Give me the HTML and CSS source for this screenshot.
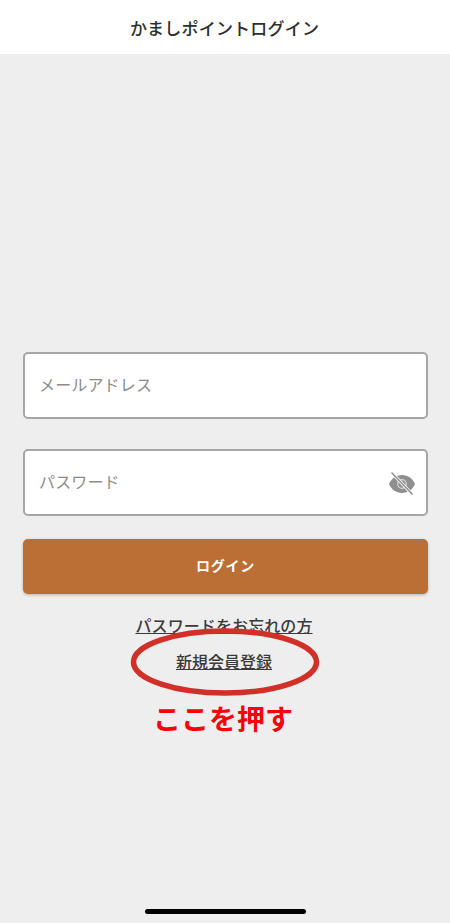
FILE: index.html
```html
<!DOCTYPE html>
<html lang="ja">
<head>
<meta charset="utf-8">
<title>かましポイントログイン</title>
<link rel="stylesheet" href="styles.css">
</head>
<body>
<div class="app">
  <header class="topbar"><h1 class="title">かましポイントログイン</h1></header>
  <main class="content">
    <form class="form">
      <div class="field"><span class="placeholder">メールアドレス</span></div>
      <div class="field field-password">
        <span class="placeholder">パスワード</span>
        <svg class="eye" viewBox="0 0 28 24" width="28" height="24" aria-hidden="true">
          <path fill="#8f8f8f" d="M14 4C8 4 3.200 7.800 1 13c2.200 5.200 7 9 13 9s10.800-3.800 13-9C24.800 7.800 20 4 14 4z"/>
          <circle cx="14" cy="13" r="4.300" fill="none" stroke="#d9d9d9" stroke-width="1.200"/>
          <path stroke="#fff" stroke-width="3.200" d="M4 2l20 21"/>
          <path stroke="#8f8f8f" stroke-width="1.500" d="M3.500 1.500l21 22"/>
        </svg>
      </div>
      <button class="login" type="button"><span class="login-label">ログイン</span></button>
    </form>
    <div class="links">
      <a class="link">パスワードをお忘れの方</a>
      <a class="link link-small">新規会員登録</a>
      <p class="note">ここを押す</p>
      <svg class="ring" viewBox="0 0 190 68" width="190" height="68" aria-hidden="true">
        <ellipse cx="95" cy="34" rx="91.500" ry="31" fill="none" stroke="#d13029" stroke-width="5.500"/>
      </svg>
    </div>
  </main>
  <div class="homebar"></div>
</div>
</body>
</html>
```
FILE: styles.css
```css
* { box-sizing: border-box; }
html, body { margin: 0; height: 100%; }
body {
  background: #eeeeee;
  font-family: "Noto Sans CJK JP", "Noto Sans", sans-serif;
  color: #333;
}
.app {
  position: relative;
  width: 450px;
  height: 923px;
  display: flex;
  flex-direction: column;
  overflow: hidden;
}
.topbar {
  height: 54px;
  background: #fff;
  display: flex;
  align-items: center;
  justify-content: center;
  flex: none;
  padding-right: 1px;
}
.title {
  margin: 0;
  font-size: 17px;
  font-weight: 500;
  line-height: 1;
  color: #2e2e2e;
  letter-spacing: 0.2px;
}
.content {
  flex: 1;
  padding: 298px 22px 0 23px;
  display: flex;
  flex-direction: column;
}
.form {
  display: flex;
  flex-direction: column;
}
.field {
  height: 67px;
  background: #fff;
  border: 2px solid #a6a6a6;
  border-radius: 5px;
  display: flex;
  align-items: center;
  justify-content: space-between;
  padding: 0 10px 0 14px;
  margin-bottom: 30px;
}
.field-password { margin-bottom: 23px; }
.placeholder {
  font-size: 16px;
  line-height: 1;
  color: #8c8c8c;
  margin-bottom: 4px;
  letter-spacing: 0.15px;
}
.eye { display: block; flex: none; }
.login {
  height: 55px;
  border: 0;
  border-radius: 5px;
  background: #bb6f35;
  box-shadow: 0 1px 3px rgba(0, 0, 0, 0.25);
  color: #fff;
  font-family: inherit;
  font-size: 14px;
  font-weight: 700;
  letter-spacing: 0.7px;
  padding: 0 0 4px;
}
.links {
  position: relative;
  display: flex;
  flex-direction: column;
  align-items: center;
  padding: 19px 3px 0 0;
}
.link {
  font-size: 16px;
  font-weight: 500;
  line-height: 24px;
  color: #3a3a3a;
  text-decoration: underline;
  letter-spacing: 0.1px;
}
.link-small {
  margin-top: 12px;
  letter-spacing: 0;
}
.note {
  margin: 25px 0 0;
  font-size: 28px;
  font-weight: 700;
  line-height: 40px;
  color: #fb0007;
  padding-right: 2px;
}
.ring {
  position: absolute;
  left: 107px;
  top: 34px;
}
.homebar {
  position: absolute;
  left: 145px;
  bottom: 9px;
  width: 161px;
  height: 5px;
  background: #000;
  border-radius: 3px;
}
```
